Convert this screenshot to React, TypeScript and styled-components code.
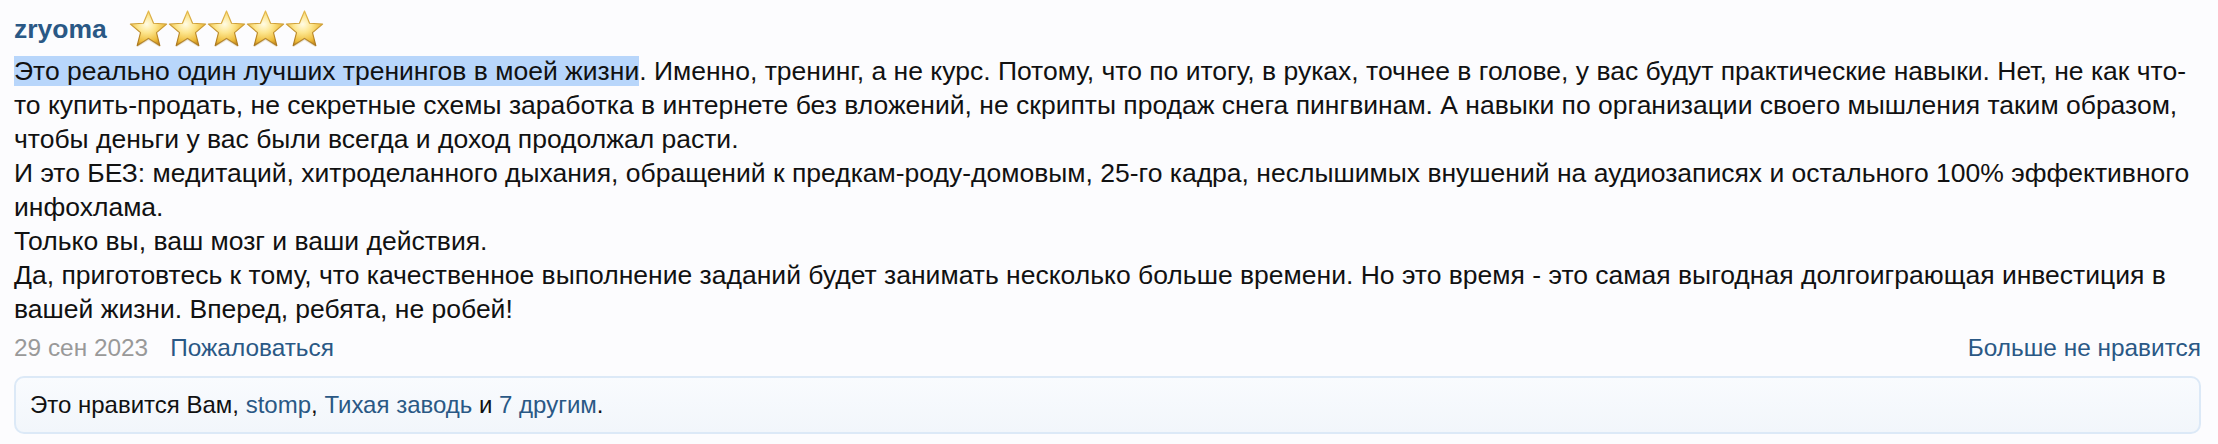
import React from 'react';
import styled, { createGlobalStyle } from 'styled-components';

const GlobalStyle = createGlobalStyle`
	html, body {
		margin: 0;
		padding: 0;
		background: #fcfcfe;
	}
	body {
		font-family: 'Liberation Sans', Arial, Helvetica, sans-serif;
		color: #111;
	}
`;

const Review = styled.div`
	display: flex;
	flex-direction: column;
	padding: 4px 17px 8px 14px;
`;

const Header = styled.div`
	display: flex;
	align-items: center;
	gap: 22px;
	height: 50px;
`;

const UserName = styled.a`
	font-size: 26.5px;
	font-weight: 700;
	color: #2a5885;
	text-decoration: none;
`;

const Stars = styled.div`
	display: flex;
	align-items: center;
`;

const Text = styled.div`
	font-size: 26.5px;
	line-height: 34px;
	color: #111;
`;

const Selected = styled.span`
	background: #b8d6fb;
`;

const Footer = styled.div`
	display: flex;
	align-items: center;
	justify-content: space-between;
	font-size: 24.4px;
	line-height: 34px;
	margin-top: 5px;
`;

const FooterLeft = styled.div`
	display: flex;
	align-items: center;
	gap: 22px;
`;

const DateLabel = styled.span`
	color: #999;
`;

const Link = styled.a`
	color: #2a5885;
	text-decoration: none;
	cursor: pointer;
`;

const LikesBox = styled.div`
	margin-top: 11px;
	padding: 12px 14px;
	font-size: 24px;
	line-height: 30px;
	color: #111;
	border: 2px solid #dce9f7;
	border-radius: 10px;
	background: linear-gradient(#f9fbfe, #f2f6fb);
`;

const Star: React.FC<{ id: number }> = ({ id }) => (
	<svg width="39" height="40" viewBox="0 0 40 41">
		<defs>
			<radialGradient id={`sg${id}`} cx="45%" cy="38%" r="62%">
				<stop offset="0%" stopColor="#fffce6" />
				<stop offset="40%" stopColor="#fde68f" />
				<stop offset="82%" stopColor="#eebd3c" />
				<stop offset="100%" stopColor="#cf9422" />
			</radialGradient>
			<linearGradient id={`ss${id}`} x1="0" y1="0" x2="0" y2="1">
				<stop offset="0%" stopColor="#e6bb4e" />
				<stop offset="100%" stopColor="#a8741a" />
			</linearGradient>
		</defs>
		<path
			d="M20 2 L25.2 14.6 L38.6 15.4 L28.2 24.2 L31.6 37.6 L20 30.2 L8.4 37.6 L11.8 24.2 L1.4 15.4 L14.8 14.6 Z"
			fill={`url(#sg${id})`}
			stroke={`url(#ss${id})`}
			strokeWidth="1.2"
			strokeLinejoin="round"
		/>
		<path d="M20 30.2 L31.6 37.6 L30.6 38.8 L20 32.4 L9.4 38.8 L8.4 37.6 Z" fill="#cdbd98" opacity="0.35" />
	</svg>
);

export default function App() {
	return (
		<>
			<GlobalStyle />
			<Review>
				<Header>
					<UserName>zryoma</UserName>
					<Stars>
						{[0, 1, 2, 3, 4].map(i => (
							<Star key={i} id={i} />
						))}
					</Stars>
				</Header>
				<Text>
					<Selected>Это реально один лучших тренингов в моей жизни</Selected>. Именно, тренинг, а не курс. Потому, что по
					итогу, в руках, точнее в голове, у вас будут практические навыки. Нет, не как что-то купить-продать, не
					секретные схемы заработка в интернете без вложений, не скрипты продаж снега пингвинам. А навыки по
					организации своего мышления таким образом, чтобы деньги у вас были всегда и доход продолжал расти.
					<br />
					И это БЕЗ: медитаций, хитроделанного дыхания, обращений к предкам-роду-домовым, 25-го кадра, неслышимых
					внушений на аудиозаписях и остального 100% эффективного инфохлама.
					<br />
					Только вы, ваш мозг и ваши действия.
					<br />
					Да, приготовтесь к тому, что качественное выполнение заданий будет занимать несколько больше времени. Но это
					время - это самая выгодная долгоиграющая инвестиция в вашей жизни. Вперед, ребята, не робей!
				</Text>
				<Footer>
					<FooterLeft>
						<DateLabel>29 сен 2023</DateLabel>
						<Link>Пожаловаться</Link>
					</FooterLeft>
					<Link>Больше не нравится</Link>
				</Footer>
				<LikesBox>
					Это нравится Вам, <Link>stomp</Link>, <Link>Тихая заводь</Link> и <Link>7 другим</Link>.
				</LikesBox>
			</Review>
		</>
	);
}
